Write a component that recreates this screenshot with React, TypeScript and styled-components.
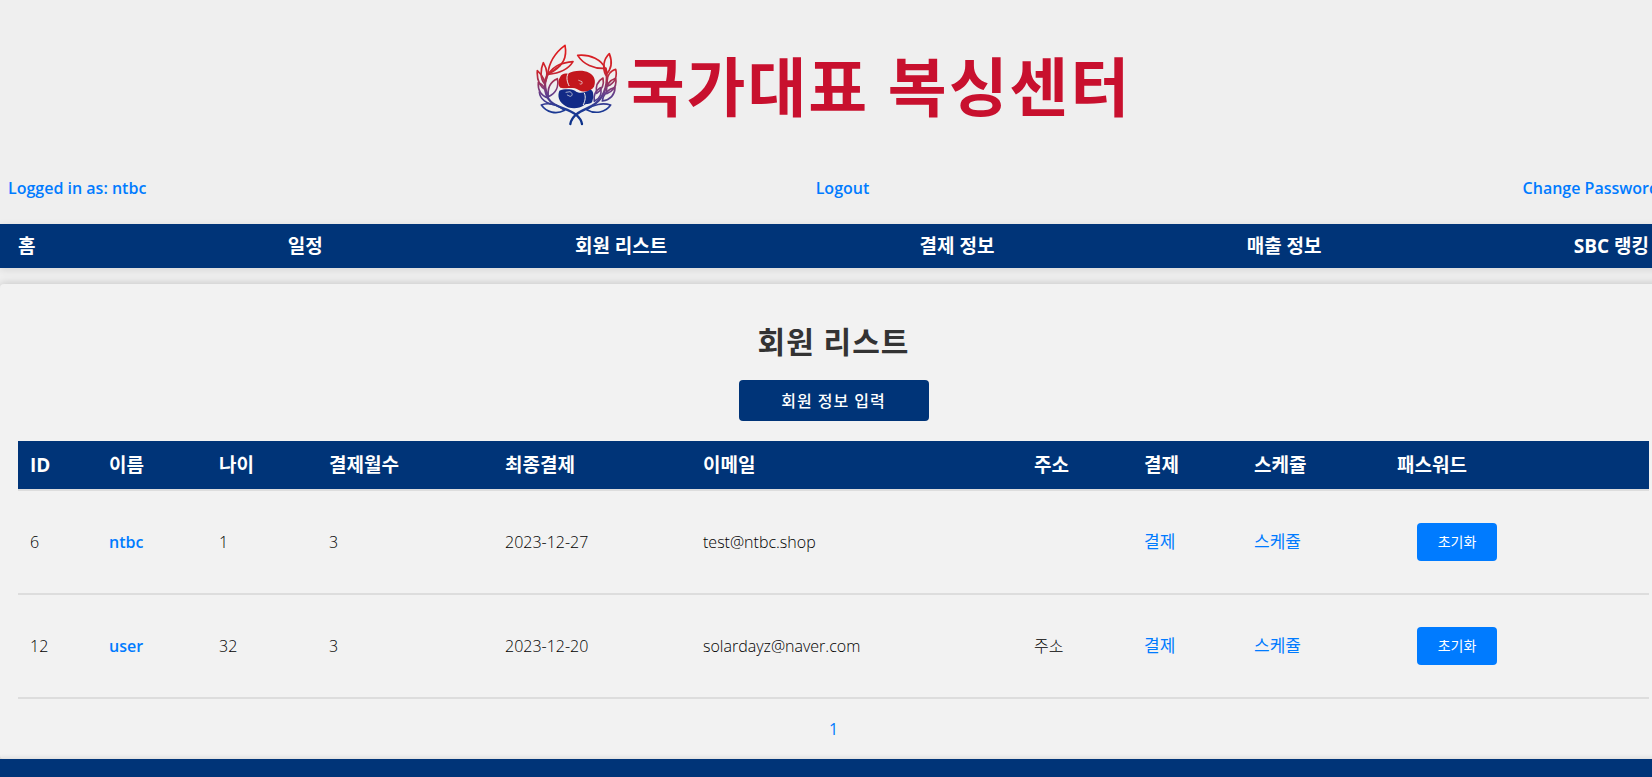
import React from 'react';
import styled, { createGlobalStyle } from 'styled-components';

const NAVY = '#003478';
const BLUE = '#007bff';
const RED = '#c8102e';

const GlobalStyle = createGlobalStyle`
  * { box-sizing: border-box; }
  body {
    margin: 0;
    overflow-x: hidden;
    background: #efefef;
    color: #000;
    font-family: 'Open Sans', 'Noto Sans CJK KR', sans-serif;
    font-size: 16px;
    line-height: 24px;
  }
  a { text-decoration: none; }
`;

/* The page runs slightly past the right edge of the window. */
const Page = styled.div`
  display: flex;
  flex-direction: column;
  width: calc(100% + 15px);
  min-height: 100vh;
`;

const Header = styled.header`
  display: flex;
  justify-content: center;
  align-items: center;
  gap: 8px;
  padding: 39px 0 41px;
`;

const Logo = styled.svg`
  width: 82px;
  height: 82px;
  flex: none;
`;

const Title = styled.h1`
  margin: 0;
  padding-top: 4px;
  color: ${RED};
  font-size: 64px;
  line-height: 88px;
  font-weight: 700;
  letter-spacing: 2px;
  white-space: nowrap;
`;

const AccountBar = styled.div`
  display: flex;
  justify-content: space-between;
  padding: 4px 8px 24px;
`;

const AccountLink = styled.a`
  color: ${BLUE};
  font-weight: 600;

  &:first-child {
    padding-right: 16px;
  }
`;

const Nav = styled.nav`
  display: flex;
  justify-content: space-between;
  align-items: center;
  height: 44px;
  padding: 0 18px;
  background: ${NAVY};
  box-shadow: 0 2px 8px rgba(0, 0, 0, 0.1);
`;

const NavLink = styled.a`
  color: #fff;
  font-size: 19px;
  font-weight: 700;
`;

const Panel = styled.main`
  display: flex;
  flex-direction: column;
  align-items: center;
  margin-top: 16px;
  padding: 36px 18px 18px;
  border-radius: 4px;
  background: #f2f2f2;
  box-shadow: 0 0 10px rgba(0, 0, 0, 0.2);
`;

const Heading = styled.h2`
  margin: 0 0 16px;
  color: #333;
  font-size: 30px;
  line-height: 44px;
  font-weight: 700;
  letter-spacing: 1px;
`;

const PrimaryButton = styled.button`
  width: 190px;
  height: 41px;
  border: 0;
  border-radius: 4px;
  background: ${NAVY};
  color: #fff;
  font: inherit;
  font-weight: 500;
  letter-spacing: 1px;
`;

const Table = styled.table`
  width: 100%;
  margin-top: 20px;
  table-layout: fixed;
  border-collapse: separate;
  border-spacing: 0;
`;

const HeadCell = styled.th`
  height: 50px;
  padding: 0 12px;
  border-bottom: 2px solid #ddd;
  background: ${NAVY};
  background-clip: padding-box;
  color: #fff;
  font-size: 19px;
  font-weight: 700;
  text-align: left;
`;

const Cell = styled.td`
  padding: 12px;
  border-bottom: 2px solid #ddd;
  font-weight: 300;
`;

const NameLink = styled.a`
  color: ${BLUE};
  font-weight: 600;
`;

const ActionLink = styled.a`
  color: ${BLUE};
  font-size: 17px;
  font-weight: 400;
`;

const ResetButton = styled.button`
  display: block;
  width: 80px;
  height: 38px;
  margin: 20px;
  border: 0;
  border-radius: 4px;
  background: ${BLUE};
  color: #fff;
  font: inherit;
  font-size: 14px;
  font-weight: 400;
`;

const Pagination = styled.nav`
  margin-top: 18px;
`;

const PageLink = styled.a`
  color: ${BLUE};
`;

const Footer = styled.footer`
  flex: 1;
  min-height: 16px;
  background: ${NAVY};
  box-shadow: 0 -2px 4px rgba(0, 0, 0, 0.08);
`;

const columns = [
  { label: 'ID', width: 79 },
  { label: '이름', width: 110 },
  { label: '나이', width: 110 },
  { label: '결제월수', width: 176 },
  { label: '최종결제', width: 198 },
  { label: '이메일', width: 331 },
  { label: '주소', width: 110 },
  { label: '결제', width: 110 },
  { label: '스케쥴', width: 143 },
  { label: '패스워드', width: 264 },
];

const members = [
  { id: 6, name: 'ntbc', age: 1, months: 3, paid: '2023-12-27', email: 'test@ntbc.shop', address: '' },
  { id: 12, name: 'user', age: 32, months: 3, paid: '2023-12-20', email: 'solardayz@naver.com', address: '주소' },
];

const navItems = ['홈', '일정', '회원 리스트', '결제 정보', '매출 정보', 'SBC 랭킹'];

function LaurelLogo() {
  return (
    <Logo viewBox="52 43 246 246" aria-hidden="true">
      <defs>
        <linearGradient id="laurel" gradientUnits="userSpaceOnUse" x1="0" y1="45" x2="0" y2="285">
          <stop offset="0" stopColor="#e3191b" />
          <stop offset="0.35" stopColor="#c9252f" />
          <stop offset="0.6" stopColor="#6b3f88" />
          <stop offset="0.8" stopColor="#1f3b96" />
          <stop offset="1" stopColor="#0a3088" />
        </linearGradient>
      </defs>
      <g fill="none" stroke="url(#laurel)" strokeWidth="5" strokeLinejoin="round" strokeLinecap="round">
        <path d="M87 134C92 91 113 66 139 47C145 78 139 109 87 134Z" />
        <path d="M88 134C110 103 134 99 163 96C149 119 125 131 88 134Z" />
        <path d="M88 134L124 108" />
        <path d="M74 99C66 118 63 145 78 163C88 143 86 119 74 99Z" />
        <path d="M56 123C54 149 61 169 81 181C82 157 74 139 56 123Z" />
        <path d="M59 158C57 181 68 198 88 205C87 184 78 168 59 158Z" />
        <path d="M116 147C95 156 86 176 89 201C112 191 121 170 116 147Z" />
        <path d="M68 226C89 218 114 224 138 242C112 256 84 248 68 226Z" />
        <path d="M62 187C64 209 84 223 112 226" />
        <path d="M87 134C72 166 78 205 104 222C122 235 150 238 171 254C182 263 188 270 190 283" strokeWidth="7" />
        <path d="M259 116C250 92 216 73 177 77C194 104 226 118 259 116Z" />
        <path d="M272 72C254 89 251 115 261 136C279 119 281 95 272 72Z" />
        <path d="M291 119C270 126 262 145 267 169C287 161 297 142 291 119Z" />
        <path d="M291 146C271 153 261 170 264 192C284 184 295 168 291 146Z" />
        <path d="M289 174C268 178 253 194 251 214C274 210 288 196 289 174Z" />
        <path d="M253 145C237 154 230 170 234 191C249 181 257 165 253 145Z" />
        <path d="M245 174C231 182 223 198 227 215C243 207 251 192 245 174Z" />
        <path d="M276 226C252 219 224 224 204 240C230 254 260 249 276 226Z" />
        <path d="M261 116C270 155 262 196 230 222C211 236 190 240 173 254C162 263 157 270 155 283" strokeWidth="7" />
      </g>
      <path
        d="M124 143C128 133 137 130 147 132C164 122 193 120 211 129C229 138 232 155 226 171C218 185 196 190 180 181C166 171 146 178 125 174C118 168 118 152 124 143Z"
        fill="#c3161d"
      />
      <path
        d="M122 183C136 177 157 178 169 183C181 194 201 188 214 180C226 180 226 202 220 218C212 225 201 222 197 226C178 240 150 238 135 225C120 214 116 198 122 183Z"
        fill="#122a86"
      />
      <g fill="none" stroke="#efefef" strokeWidth="3" strokeLinecap="round">
        <path d="M148 132C142 142 145 157 151 168" />
        <path d="M180 152L190 156C192 163 188 165 184 163" strokeWidth="2" />
        <path d="M197 190C202 201 200 212 194 225" />
        <path d="M142 188L154 186C163 190 162 200 154 200L146 196" strokeWidth="2" />
      </g>
    </Logo>
  );
}

export default function App() {
  return (
    <Page>
      <GlobalStyle />
      <Header>
        <LaurelLogo />
        <Title>국가대표 복싱센터</Title>
      </Header>
      <AccountBar>
        <AccountLink href="#account">Logged in as: ntbc</AccountLink>
        <AccountLink href="#logout">Logout</AccountLink>
        <AccountLink href="#password">Change Password</AccountLink>
      </AccountBar>
      <Nav>
        {navItems.map((item) => (
          <NavLink key={item} href={`#${item}`}>{item}</NavLink>
        ))}
      </Nav>
      <Panel>
        <Heading>회원 리스트</Heading>
        <PrimaryButton type="button">회원 정보 입력</PrimaryButton>
        <Table>
          <colgroup>
            {columns.map((c) => <col key={c.label} style={{ width: c.width }} />)}
          </colgroup>
          <thead>
            <tr>
              {columns.map((c) => <HeadCell key={c.label} scope="col">{c.label}</HeadCell>)}
            </tr>
          </thead>
          <tbody>
            {members.map((m) => (
              <tr key={m.id}>
                <Cell>{m.id}</Cell>
                <Cell><NameLink href={`#member-${m.id}`}>{m.name}</NameLink></Cell>
                <Cell>{m.age}</Cell>
                <Cell>{m.months}</Cell>
                <Cell>{m.paid}</Cell>
                <Cell>{m.email}</Cell>
                <Cell>{m.address}</Cell>
                <Cell><ActionLink href={`#payment-${m.id}`}>결제</ActionLink></Cell>
                <Cell><ActionLink href={`#schedule-${m.id}`}>스케쥴</ActionLink></Cell>
                <Cell><ResetButton type="button">초기화</ResetButton></Cell>
              </tr>
            ))}
          </tbody>
        </Table>
        <Pagination>
          <PageLink href="#page-1">1</PageLink>
        </Pagination>
      </Panel>
      <Footer />
    </Page>
  );
}
